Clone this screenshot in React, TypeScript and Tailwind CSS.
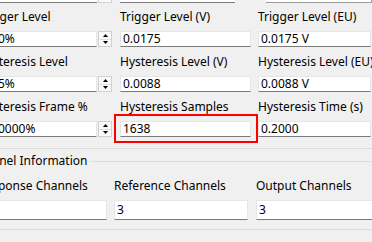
import React from "react";

type FieldProps = { value: string; spin?: boolean; tall?: boolean; highlight?: boolean };

function Field({ value, spin, tall, highlight }: FieldProps) {
  const h = tall ? "h-[20px]" : "h-[16px]";
  return (
    <div className={`relative flex ${h}`}>
      <div className="flex-1 min-w-0 bg-white border border-[#e6e6e6] border-b-[#7a7a7a] px-[2px] flex items-center leading-none overflow-hidden whitespace-nowrap">
        {value}
      </div>
      {spin && (
        <div className="w-[14px] ml-px flex flex-col border border-[#d0d0d0] bg-[#fafafa]">
          <div className="flex-1 flex items-center justify-center border-b border-[#e0e0e0]">
            <svg width="5" height="3" viewBox="0 0 5 3">
              <path d="M0 3 L2.5 0 L5 3 Z" fill="#000" />
            </svg>
          </div>
          <div className="flex-1 flex items-center justify-center">
            <svg width="5" height="3" viewBox="0 0 5 3">
              <path d="M0 0 L2.5 3 L5 0 Z" fill="#000" />
            </svg>
          </div>
        </div>
      )}
      {highlight && (
        <div className="absolute -left-[6px] -right-[7px] -top-[7px] -bottom-[6px] border-2 border-[#ff0000]" />
      )}
    </div>
  );
}

function Cell({ label, children, w }: { label: string; children: React.ReactNode; w: string }) {
  return (
    <div className={`${w} shrink-0 flex flex-col`}>
      <div className="h-[15px] leading-[15px] whitespace-nowrap">{label}</div>
      <div className="mt-[7px]">{children}</div>
    </div>
  );
}

export default function App() {
  const rows = [
    [
      { label: "Trigger Level", value: "10.0%", spin: true },
      { label: "Trigger Level (V)", value: "0.0175" },
      { label: "Trigger Level (EU)", value: "0.0175 V" },
    ],
    [
      { label: "Hysteresis Level", value: "8.75%", spin: true },
      { label: "Hysteresis Level (V)", value: "0.0088" },
      { label: "Hysteresis Level (EU)", value: "0.0088 V" },
    ],
    [
      { label: "Hysteresis Frame %", value: "10.0000%", spin: true },
      { label: "Hysteresis Samples", value: "1638", highlight: true },
      { label: "Hysteresis Time (s)", value: "0.2000" },
    ],
  ];

  return (
    <div className="w-[372px] h-[242px] overflow-hidden bg-[#f0f0f0] text-[12px] text-black font-['Noto_Sans',sans-serif]">
      {/* cut-off row above */}
      <div className="ml-[-22px] flex gap-[8px]">
        <div className="w-[134px] flex h-[3px]">
          <div className="flex-1 bg-white border-b border-[#7a7a7a]" />
          <div className="w-[14px] ml-px bg-[#fafafa] border-x border-b border-[#d0d0d0]" />
        </div>
        <div className="w-[115px] h-[3px] bg-white border-b border-[#7a7a7a]" />
        <div className="ml-[23px] w-[106px] h-[3px] bg-white border-b border-r border-[#9a9a9a]" />
      </div>

      <div className="ml-[-22px] mt-[6px] flex flex-col gap-[7px]">
        {rows.map((row, i) => (
          <div key={i} className="flex">
            <Cell label={row[0].label} w="w-[134px]">
              <Field value={row[0].value} spin />
            </Cell>
            <div className="w-[8px] shrink-0" />
            <Cell label={row[1].label} w="w-[131px]">
              <Field value={row[1].value} highlight={"highlight" in row[1]} />
            </Cell>
            <div className="w-[7px] shrink-0" />
            <Cell label={row[2].label} w="w-[113px]">
              <Field value={row[2].value} />
            </Cell>
          </div>
        ))}
      </div>

      {/* upper group bottom */}
      <div className="mt-[11px] h-px bg-[#dcdcdc]" />

      {/* Channel Information group */}
      <div className="ml-[-30px] mt-[4px] flex items-center h-[16px]">
        <span className="whitespace-nowrap leading-[16px]">Channel Information</span>
        <div className="flex-1 ml-[4px] h-px bg-[#dcdcdc]" />
      </div>
      <div className="ml-[-22px] mt-[9px] flex">
        <Cell label="Response Channels" w="w-[129px]">
          <Field value="" tall />
        </Cell>
        <div className="w-[7px] shrink-0" />
        <Cell label="Reference Channels" w="w-[134px]">
          <Field value="3" tall />
        </Cell>
        <div className="w-[8px] shrink-0" />
        <Cell label="Output Channels" w="w-[120px]">
          <Field value="3" tall />
        </Cell>
      </div>
      <div className="mt-[9px] h-px bg-[#dcdcdc]" />
    </div>
  );
}
